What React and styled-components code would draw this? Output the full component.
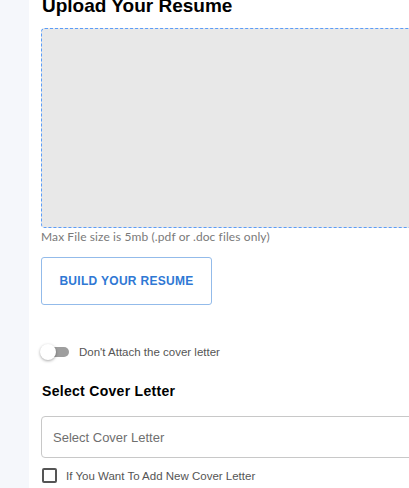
import React from "react";
import styled, { createGlobalStyle } from "styled-components";

const Global = createGlobalStyle`
  html, body { margin: 0; padding: 0; background: #fff; }
  body { font-family: Arial, "Liberation Sans", sans-serif; overflow: hidden; }
`;

const Page = styled.div`
  display: flex;
  width: 409px;
  height: 488px;
  overflow: hidden;
`;

const Sidebar = styled.div`
  flex: 0 0 29px;
  background: #f5f7fb;
`;

const Main = styled.div`
  flex: 1;
  min-width: 0;
  background: #fff;
  padding-left: 12px;
  display: flex;
  flex-direction: column;
`;

const Title = styled.h2`
  margin: -6px 0 0 1px;
  font: bold 19px/24px "Liberation Sans", Arial, sans-serif;
  color: #000;
`;

const Dropzone = styled.div`
  margin-top: 10px;
  width: 420px;
  height: 198px;
  background: #e8e8e8;
  border: 1px dashed #5a9cf8;
  border-radius: 4px;
`;

const Hint = styled.div`
  margin-top: 1px;
  font: 12px/16px "Lato", "Open Sans", sans-serif;
  letter-spacing: 0.1px;
  color: #7a7a7a;
`;

const BuildButton = styled.button`
  margin-top: 12px;
  width: 171px;
  height: 48px;
  background: #fff;
  border: 1px solid #93bbea;
  border-radius: 3px;
  font: bold 12px "Liberation Sans", Arial, sans-serif;
  letter-spacing: 0.3px;
  color: #2f78d4;
  padding: 0;
`;

const ToggleRow = styled.label`
  margin-top: 39px;
  display: flex;
  align-items: center;
  gap: 10px;
  height: 16px;
`;

const Track = styled.span`
  position: relative;
  width: 27px;
  height: 10px;
  margin-left: 1px;
  border-radius: 5px;
  background: #9e9e9e;
`;

const Knob = styled.span`
  position: absolute;
  left: -2px;
  top: -3px;
  width: 16px;
  height: 16px;
  border-radius: 50%;
  background: #fff;
  box-shadow: 0 1px 3px rgba(0, 0, 0, 0.35);
`;

const SmallLabel = styled.span`
  font: 11.5px "Liberation Sans", Arial, sans-serif;
  color: #555;
`;

const SectionTitle = styled.div`
  margin-top: 22px;
  margin-left: 1px;
  font: bold 14px/18px "Liberation Sans", Arial, sans-serif;
  letter-spacing: 0.3px;
  color: #000;
`;

const SelectBox = styled.div`
  margin-top: 16px;
  width: 420px;
  height: 42px;
  border: 1px solid #c8c8c8;
  border-radius: 4px;
  display: flex;
  align-items: center;
  padding-left: 11px;
  box-sizing: border-box;
  font: 13px "Liberation Sans", Arial, sans-serif;
  color: #6f6f6f;
`;

const CheckRow = styled.label`
  margin-top: 10px;
  display: flex;
  align-items: center;
  gap: 9px;
  margin-left: 1px;
`;

const CheckBox = styled.span`
  width: 11px;
  height: 11px;
  border: 2px solid #555;
  border-radius: 2px;
`;

export default function App() {
  return (
    <>
      <Global />
      <Page>
        <Sidebar />
        <Main>
          <Title>Upload Your Resume</Title>
          <Dropzone />
          <Hint>Max File size is 5mb (.pdf or .doc files only)</Hint>
          <div>
            <BuildButton>BUILD YOUR RESUME</BuildButton>
          </div>
          <ToggleRow>
            <Track>
              <Knob />
            </Track>
            <SmallLabel>Don't Attach the cover letter</SmallLabel>
          </ToggleRow>
          <SectionTitle>Select Cover Letter</SectionTitle>
          <SelectBox>Select Cover Letter</SelectBox>
          <CheckRow>
            <CheckBox />
            <SmallLabel>If You Want To Add New Cover Letter</SmallLabel>
          </CheckRow>
        </Main>
      </Page>
    </>
  );
}
